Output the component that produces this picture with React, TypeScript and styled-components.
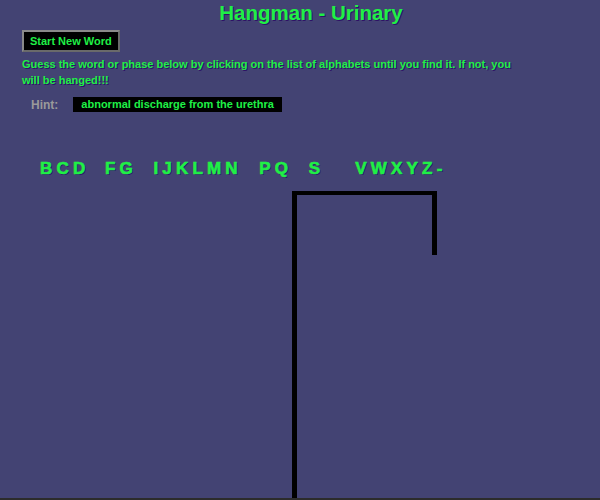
import React from "react";
import styled, { createGlobalStyle } from "styled-components";

const Global = createGlobalStyle`
  html, body { margin: 0; padding: 0; background: #434373; }
  body { font-family: "Liberation Sans", Arial, sans-serif; }
`;

const Page = styled.div`
  height: 100vh;
  display: flex;
  flex-direction: column;
  overflow: hidden;
`;

const Main = styled.div`
  flex: 1;
  overflow: hidden;
  padding-left: 22px;
`;

const Strip = styled.div`
  height: 2px;
  background: #2c2c2c;
`;

const green = "#1ff046";
const shadow = "1px 1px 0 #2e1266";

const Title = styled.h1`
  margin: 0;
  font-size: 20.5px;
  line-height: 25px;
  font-weight: bold;
  color: ${green};
  text-shadow: ${shadow};
  text-align: center;
`;

const Button = styled.button`
  margin-top: 5px;
  height: 22px;
  padding: 0 6px;
  background: #000;
  color: ${green};
  font-family: "Liberation Sans", Arial, sans-serif;
  font-weight: bold;
  font-size: 11px;
  border: 2px solid #8a8a8a;
  border-right-color: #6a6a6a;
  border-bottom-color: #6a6a6a;
  cursor: pointer;
`;

const Intro = styled.p`
  margin: 4px 0 0;
  max-width: 500px;
  font-size: 11px;
  line-height: 16px;
  font-weight: bold;
  color: ${green};
  text-shadow: ${shadow};
`;

const HintRow = styled.div`
  display: flex;
  align-items: center;
  gap: 15px;
  margin-top: 9px;
  padding-left: 9px;
`;

const HintLabel = styled.span`
  font-size: 12px;
  font-weight: bold;
  color: #9a9a9a;
`;

const HintBox = styled.span`
  background: #000;
  color: ${green};
  font-size: 11px;
  font-weight: bold;
  height: 15px;
  line-height: 15px;
  padding: 0 8px;
  white-space: nowrap;
`;

const Letters = styled.div`
  display: flex;
  margin-top: 48px;
  padding-left: 1.5px;
`;

const Letter = styled.span<{ $used: boolean }>`
  display: inline-block;
  margin-right: 4.2px;
  font-family: "Liberation Sans", Arial, sans-serif;
  font-weight: bold;
  font-size: 17px;
  line-height: 18px;
  color: ${green};
  -webkit-text-stroke: 0.6px ${green};
  text-shadow: ${shadow};
  cursor: pointer;
  visibility: ${(p) => (p.$used ? "hidden" : "visible")};
`;

const Gallows = styled.svg`
  display: block;
  margin-top: 13px;
  margin-left: 270px;
`;

const alphabet = "ABCDEFGHIJKLMNOPQRSTUVWXYZ-".split("");
const guessed = new Set("AEHORTU".split(""));

export default function App() {
  return (
    <Page>
      <Global />
      <Main>
        <Title>Hangman - Urinary</Title>
        <Button>Start New Word</Button>
        <Intro>
          Guess the word or phase below by clicking on the list of alphabets until you find it. If not, you will be
          hanged!!!
        </Intro>
        <HintRow>
          <HintLabel>Hint:</HintLabel>
          <HintBox>abnormal discharge from the urethra</HintBox>
        </HintRow>
        <Letters>
          {alphabet.map((l) => (
            <Letter key={l} $used={guessed.has(l)}>
              {l}
            </Letter>
          ))}
        </Letters>
        <Gallows width="200" height="320" viewBox="0 0 200 320">
          <rect x="0" y="0" width="145" height="4" fill="#000" />
          <rect x="0" y="0" width="5" height="320" fill="#000" />
          <rect x="140" y="0" width="5" height="64" fill="#000" />
        </Gallows>
      </Main>
      <Strip />
    </Page>
  );
}
